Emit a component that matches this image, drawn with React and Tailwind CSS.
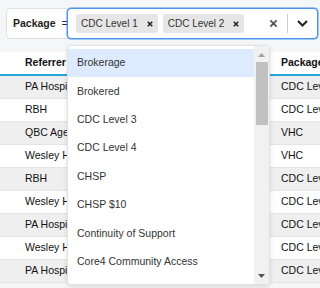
import React from 'react';

const rows = [
  { referrer: 'PA Hospital', pkg: 'CDC Level 2' },
  { referrer: 'RBH', pkg: 'CDC Level 1' },
  { referrer: 'QBC Aged Care', pkg: 'VHC' },
  { referrer: 'Wesley Hospital', pkg: 'VHC' },
  { referrer: 'RBH', pkg: 'CDC Level 2' },
  { referrer: 'Wesley Hospital', pkg: 'CDC Level 1' },
  { referrer: 'PA Hospital', pkg: 'CDC Level 2' },
  { referrer: 'Wesley Hospital', pkg: 'CDC Level 1' },
  { referrer: 'PA Hospital', pkg: 'CDC Level 2' },
];

const options = [
  'Brokerage',
  'Brokered',
  'CDC Level 3',
  'CDC Level 4',
  'CHSP',
  'CHSP $10',
  'Continuity of Support',
  'Core4 Community Access',
];

function Chip({ label }) {
  return (
    <div className="flex items-center h-[19px] rounded-[2px] bg-[#e6e6e6] pl-[5px] pr-[5px] mr-[5px]">
      <span className="text-[10px] text-[#333]">{label}</span>
      <svg width="6" height="6" viewBox="0 0 8 8" className="ml-[9px]">
        <path d="M1 1 L7 7 M7 1 L1 7" stroke="#222" strokeWidth="2" />
      </svg>
    </div>
  );
}

export default function App() {
  return (
    <div
      className="relative w-[320px] h-[288px] overflow-hidden bg-[#f5f6f8]"
      style={{ fontFamily: '"Liberation Sans", Arial, sans-serif' }}
    >
      {/* Filter bar */}
      <div className="flex pt-2 pl-1.5 pr-[2px] h-[39px]">
        <div className="flex items-center w-[61px] bg-white border border-r-0 border-[#dde0e4] rounded-l-[5px] pl-[6px]">
          <span className="text-[10.5px] font-bold text-[#222]">Package</span>
          <span className="text-[10.5px] text-[#222] ml-[6px]">=</span>
        </div>
        <div className="flex-1 flex items-center bg-white border border-[#4d94ee] rounded-[4px] pl-[8px] shadow-[0_0_0_0.5px_#4d94ee]">
          <Chip label="CDC Level 1" />
          <Chip label="CDC Level 2" />
          <div className="flex-1" />
          <svg width="9" height="9" viewBox="0 0 10 10" className="mr-[9px]">
            <path d="M1.5 1.5 L8.5 8.5 M8.5 1.5 L1.5 8.5" stroke="#555" strokeWidth="2" />
          </svg>
          <div className="w-px h-[19px] bg-[#ccc]" />
          <svg width="11" height="7" viewBox="0 0 11 7" className="mx-[9px]">
            <path d="M1 1 L5.5 5.5 L10 1" stroke="#222" strokeWidth="2" fill="none" />
          </svg>
        </div>
      </div>

      {/* Table */}
      <div className="mt-[13px] bg-white">
        <div className="grid grid-cols-[271px_1fr] h-[24px] items-center border-b-2 border-[#23a5d8]">
          <div className="pl-[25px] text-[10.5px] font-bold text-[#111]">Referrer</div>
          <div className="pl-[10px] text-[10.5px] font-bold text-[#111] whitespace-nowrap">Package</div>
        </div>
        {rows.map((row, i) => (
          <div
            key={i}
            className={`grid grid-cols-[271px_1fr] h-[23px] items-center border-b border-[#e4e4e4] ${
              i % 2 === 0 ? 'bg-[#efefef]' : 'bg-white'
            }`}
          >
            <div className="pl-[25px] text-[10.5px] text-[#111] whitespace-nowrap overflow-hidden">{row.referrer}</div>
            <div className="pl-[10px] text-[10.5px] text-[#111] whitespace-nowrap overflow-hidden">{row.pkg}</div>
          </div>
        ))}
      </div>

      {/* Dropdown menu */}
      <div className="absolute left-[67px] top-[45px] w-[203px] h-[240px] bg-white border border-[#e2e2e2] rounded-[4px] shadow-[0_2px_5px_rgba(0,0,0,0.12)] flex overflow-hidden">
        <div className="flex-1 pt-[3px]">
          {options.map((opt, i) => (
            <div
              key={opt}
              className={`h-[28.4px] flex items-center pl-[9px] text-[10.5px] text-[#333] ${
                i === 0 ? 'bg-[#deebff]' : ''
              }`}
            >
              {opt}
            </div>
          ))}
        </div>
        <div className="w-[15px] bg-[#f1f1f1] flex flex-col items-center">
          <svg width="7" height="4" viewBox="0 0 7 4" className="mt-[7px]">
            <path d="M0 4 L3.5 0 L7 4 Z" fill="#a3a3a3" />
          </svg>
          <div className="w-[12px] h-[63px] bg-[#c1c1c1] mt-[5px]" />
          <div className="flex-1" />
          <svg width="7" height="4" viewBox="0 0 7 4" className="mb-[6px]">
            <path d="M0 0 L3.5 4 L7 0 Z" fill="#505050" />
          </svg>
        </div>
      </div>
    </div>
  );
}
